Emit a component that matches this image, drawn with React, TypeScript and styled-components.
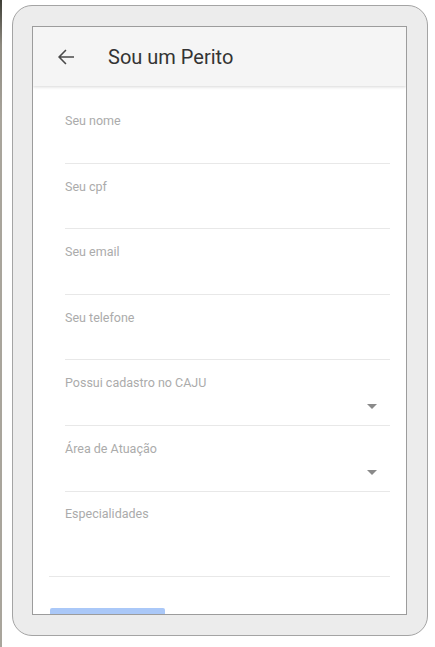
import React from 'react';
import styled, { createGlobalStyle } from 'styled-components';

const GlobalStyle = createGlobalStyle`
  html, body {
    margin: 0;
    padding: 0;
    background: #ffffff;
    font-family: Roboto, "Liberation Sans", Arial, sans-serif;
  }
`;

const Page = styled.div`
  display: flex;
  align-items: flex-start;
  height: 647px;
  overflow: hidden;
`;

const LeftEdge = styled.div`
  width: 2px;
  height: 647px;
  flex-shrink: 0;
  background: linear-gradient(to bottom, #3e3e36 0, #8e8a80 45px, #a9a59c 120px, #a9a59c 100%);
`;

const Device = styled.div`
  margin: 5px 0 0 10px;
  width: 416px;
  height: 631px;
  box-sizing: border-box;
  border: 1px solid #a4a4a4;
  border-radius: 20px;
  background: #ececec;
  padding: 20px 0 0 19px;
`;

const Screen = styled.div`
  width: 375px;
  height: 589px;
  box-sizing: border-box;
  border: 1px solid #9c9c9c;
  background: #ffffff;
  overflow: hidden;
  display: flex;
  flex-direction: column;
`;

const Header = styled.header`
  position: relative;
  z-index: 1;
  flex-shrink: 0;
  height: 59px;
  background: #f5f5f5;
  box-shadow: 0 1px 3px rgba(0, 0, 0, 0.16);
  display: flex;
  align-items: center;
  padding-left: 21px;
`;

const BackButton = styled.button`
  border: 0;
  padding: 0;
  background: none;
  display: flex;
  color: #4a4a4a;
  margin-right: 30px;
`;

const Title = styled.h1`
  margin: 0;
  font-size: 20px;
  font-weight: 400;
  color: #333333;
`;

const Form = styled.form`
  padding: 13px 16px 0;
  display: flex;
  flex-direction: column;
`;

const Field = styled.div`
  flex-shrink: 0;
  height: 64.6px;
  padding-top: 14px;
  margin: 0 0 1px 16px;
  box-sizing: border-box;
  border-bottom: 1px solid #e8e8e8;
  display: flex;
  flex-direction: column;
`;

const Label = styled.label`
  font-size: 12.5px;
  line-height: 16px;
  color: #ababab;
`;

const InputArea = styled.div`
  flex: 1;
  display: flex;
  justify-content: flex-end;
  align-items: flex-start;
  padding: 13px 13px 0 0;
`;

const Caret = styled.span`
  width: 0;
  height: 0;
  border-left: 5px solid transparent;
  border-right: 5px solid transparent;
  border-top: 5px solid #8a8a8a;
`;

const TextAreaField = styled.div`
  height: 84px;
  box-sizing: border-box;
  padding-top: 13px;
  border-bottom: 1px solid #e8e8e8;
`;

const TextAreaLabel = styled(Label)`
  display: block;
  margin-left: 16px;
`;

const Submit = styled.button`
  margin: 31px 0 0 1px;
  width: 115px;
  height: 36px;
  border: 0;
  border-radius: 2px;
  background: #aac8f8;
`;

const fields = [
  { label: 'Seu nome' },
  { label: 'Seu cpf' },
  { label: 'Seu email' },
  { label: 'Seu telefone' },
  { label: 'Possui cadastro no CAJU', select: true },
  { label: 'Área de Atuação', select: true },
];

const App: React.FC = () => (
  <Page>
    <GlobalStyle />
    <LeftEdge />
    <Device>
      <Screen>
        <Header>
          <BackButton aria-label="Voltar">
            <svg width="24" height="24" viewBox="0 0 24 24" fill="currentColor">
              <path d="M20 11.2H6.9l5.6-5.6L11.4 4.5 4 12l7.4 7.5 1.1-1.1-5.6-5.6H20z" />
            </svg>
          </BackButton>
          <Title>Sou um Perito</Title>
        </Header>
        <Form>
          {fields.map((f) => (
            <Field key={f.label}>
              <Label>{f.label}</Label>
              <InputArea>{f.select && <Caret />}</InputArea>
            </Field>
          ))}
          <TextAreaField>
            <TextAreaLabel>Especialidades</TextAreaLabel>
          </TextAreaField>
          <div>
            <Submit type="button" />
          </div>
        </Form>
      </Screen>
    </Device>
  </Page>
);

export default App;
